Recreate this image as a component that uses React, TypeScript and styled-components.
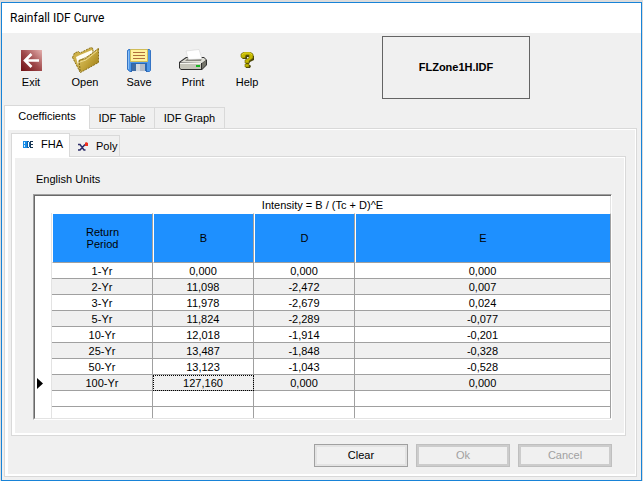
import React from "react";
import styled, { createGlobalStyle } from "styled-components";

const face = "#f0f0f0";
const edge = "#d9d9d9";
const line = "#a0a0a0";

const GlobalStyle = createGlobalStyle`
  * { box-sizing: border-box; }
  body {
    margin: 0;
    background: #dcdcdc;
    color: #000;
    font: 11px/14px "Liberation Sans", Arial, sans-serif;
  }
  button { font: inherit; color: inherit; padding: 0; border: 0; background: none; }
`;

const Window = styled.main`
  display: flex;
  flex-direction: column;
  min-height: calc(100vh - 2px);
  margin: 2px 1px 0;
  border: 1px solid #1883d7;
  background: ${face};
`;

const TitleBar = styled.h1`
  margin: 0;
  padding: 0 8px;
  background: #fff;
  font: 12px/30px Roboto, "Open Sans", sans-serif;
`;

const Toolbar = styled.header`
  display: flex;
  align-items: flex-start;
  height: 72px;
  padding: 3px 2px 0;
`;

const Tool = styled.button`
  display: flex;
  flex-direction: column;
  align-items: center;
  width: 54px;
  padding-top: 9px;
`;

const ToolIcon = styled.span`
  display: flex;
  align-items: center;
  justify-content: center;
  height: 30px;
`;

const FileBox = styled.output`
  display: flex;
  align-items: center;
  justify-content: center;
  width: 148px;
  height: 63px;
  margin-left: 108px;
  padding-bottom: 2px;
  border: 1px solid #646464;
  font-weight: bold;
`;

const TabStrip = styled.div`
  display: flex;
  align-items: flex-end;
`;

const Tab = styled.button<{ $width: number; $indent?: number }>`
  display: flex;
  align-items: center;
  justify-content: ${(p) => (p.$indent ? "flex-start" : "center")};
  gap: 8px;
  width: ${(p) => p.$width}px;
  height: 21px;
  padding-left: ${(p) => p.$indent ?? 0}px;
  border: 1px solid ${edge};
  border-width: 1px 1px 0 0;

  &[aria-selected="true"] {
    position: relative;
    height: 24px;
    margin-bottom: -1px;
    padding-bottom: 3px;
    border-left-width: 1px;
    background: #fff;
  }
`;

const Page = styled.section<{ $grow?: boolean }>`
  display: flex;
  flex: ${(p) => (p.$grow ? "1" : "none")};
  padding: 1px 1px 2px 3px;
  border: 1px solid ${edge};
  background: #fff;
`;

const OuterArea = styled.div`
  display: flex;
  flex: 1;
  flex-direction: column;
  padding: 0 4px 3px 2px;
`;

const OuterPage = styled.div`
  flex: 1;
  padding: 3px 9px 7px 3px;
  background: ${face};
`;

const InnerPage = styled.div`
  flex: 1;
  padding: 14px 12px 13px 18px;
  background: ${face};
`;

const Units = styled.div`
  padding: 0 3px 8px;
`;

const GridFrame = styled.div`
  border: 1px solid #fff;
  border-top-color: ${line};
  border-left-color: ${line};
`;

const Grid = styled.table`
  width: 100%;
  table-layout: fixed;
  border-spacing: 0;
  border: 1px solid #696969;
  border-right: 0;
  border-bottom-color: #e3e3e3;
  background: #fff;
  text-align: center;
`;

const GutterCol = styled.col`
  width: 17px;
`;

const ValueCol = styled.col`
  width: 101px;
`;

const Formula = styled.th`
  height: 17px;
  padding: 1px 0 0;
  border-right: 1px solid #e3e3e3;
  font-weight: normal;
  line-height: 16px;
`;

const Gutter = styled.td`
  padding: 0 0 0 2px;
  border-right: 1px solid #e3e3e3;
`;

const Marker = styled.svg`
  display: block;
`;

const Head = styled.th`
  height: 50px;
  padding: 0;
  border: 1px solid #fff;
  border-right-color: ${line};
  border-bottom-color: ${line};
  background: #1e90ff;
  font-weight: normal;
  line-height: 12px;
`;

const Row = styled.tr<{ $shade?: boolean; $last?: boolean }>`
  height: ${(p) => (p.$last ? 11 : 16)}px;

  & > ${Gutter} ~ * {
    padding: ${(p) => (p.$last ? 0 : 1)}px 0 0;
    border-right: 1px solid ${line};
    border-bottom: ${(p) => (p.$last ? "0" : `1px solid ${line}`)};
    background: ${(p) => (p.$shade ? face : "#fff")};
    font-weight: normal;
    line-height: 14px;
  }
`;

const Value = styled.td<{ $focused?: boolean }>`
  outline: ${(p) => (p.$focused ? "1px dotted #000" : "none")};
  outline-offset: -1px;
`;

const Actions = styled.footer`
  display: flex;
  justify-content: flex-end;
  gap: 8px;
  padding: 8px 14px 0 0;
`;

const Action = styled.button`
  width: 94px;
  height: 23px;
  padding-bottom: 1px;
  border: 1px solid ${line};
  box-shadow: inset 0 0 0 2px #e3e3e3;

  &:disabled {
    border-color: #bfbfbf;
    box-shadow: inset 0 0 0 2px #ccc;
    color: #a0a0a0;
  }
`;

const ExitIcon = () => (
  <svg width="21" height="21" viewBox="0 0 21 21" aria-hidden="true">
    <defs>
      <linearGradient id="exit" x1="0" y1="1" x2="1" y2="0">
        <stop offset="0" stopColor="#701014" />
        <stop offset=".5" stopColor="#a04a4c" />
        <stop offset="1" stopColor="#e4b0ae" />
      </linearGradient>
    </defs>
    <path d="M0 0h21v21H0z" fill="url(#exit)" />
    <path d="M18 10.500H5M10.500 4L4 10.500l6.500 6.500" fill="none" stroke="#fff" strokeWidth="2.600" />
  </svg>
);

const OpenIcon = () => (
  <svg width="27" height="27" viewBox="0 0 27 27" aria-hidden="true">
    <defs>
      <linearGradient id="folder" x1="0" y1="0" x2="1" y2="1">
        <stop offset="0" stopColor="#e2cc72" />
        <stop offset=".5" stopColor="#c4a63c" />
        <stop offset="1" stopColor="#96740c" />
      </linearGradient>
    </defs>
    <path d="M.500 10.500l2-4.500 4-1.500 1.500 1.500L19 .500l2 1v4L7 14l1 11z" fill="#cdb04a" stroke="#8a7018" strokeDasharray="2 1" />
    <path d="M4 10l4-2L20 3l1 3-7 4-7 3-1 5z" fill="#fffdf2" />
    <path d="M7 13.500l6-2L24.500 3 26.500 1v14.500L8.500 25.500z" fill="url(#folder)" stroke="#8a7018" strokeDasharray="2 1" />
    <path d="M8 15l6-2L25 4" fill="none" stroke="#eedc92" />
  </svg>
);

const SaveIcon = () => (
  <svg width="24" height="23" viewBox="0 0 24 23" aria-hidden="true">
    <path d="M.500 1.500l1-1h21l1 1v20l-1 1H3L.500 20.500z" fill="#4f98e8" stroke="#3574c4" />
    <path d="M1.500 2v18" stroke="#8cc0f6" />
    <path d="M3.500 .500h17v12h-17z" fill="#fff29c" stroke="#d0bc58" />
    <path d="M6 3.500h12M6 6.500h12M6 9.500h12" stroke="#b0703c" />
    <path d="M4 14h16v9H4z" fill="#2a68b4" />
    <path d="M5 15h5v7H5z" fill="#3f6ca4" />
    <path d="M9 15h9v7H9z" fill="#d4d9e0" />
    <path d="M13 15h5v7h-5z" fill="#b4bcc8" />
    <path d="M5 22.500h14" stroke="#e8ecf2" />
  </svg>
);

const PrintIcon = () => (
  <svg width="28" height="22" viewBox="0 0 28 22" aria-hidden="true">
    <path d="M0 13l7-5h18l3 3v5l-5 5H2l-2-2z" fill="#303030" />
    <path d="M1 13.500L7.500 9H25l2 2-4 3z" fill="#deded6" />
    <path d="M1 14h21v6H2l-1-1z" fill="#c6c6ba" />
    <path d="M1 14.500h21" stroke="#f4f4ee" />
    <path d="M23 14.500l4-3.500v5l-4 4z" fill="#74746a" />
    <path d="M6 12l3-3h14l-1 3z" fill="#8a8a82" />
    <path d="M9.500 10.500L7 2 20 .500l3 9.500z" fill="#fff" stroke="#cfcfcf" strokeWidth=".5" />
    <path d="M17 16h4v2h-4z" fill="#16b622" />
  </svg>
);

const HelpIcon = () => (
  <svg width="15" height="16" viewBox="0 0 15 16" aria-hidden="true">
    <path d="M2 6V4l2-2h7l3 2v4l-4 2-1 2H6V9l4-2V5H7v2H3zM6 13h4l1 1-1 2H6z" fill="#4a4508" />
    <path d="M1 5V2l3-2h6l3 2v4l-4 3v2H5V8l4-2V3H6L5 6H2zM5 12h4v3H5z" fill="#c4b800" stroke="#6b6408" strokeWidth=".6" />
    <path d="M2 3l2-2h6l2 2" fill="none" stroke="#e0d420" />
  </svg>
);

const FhaIcon = () => (
  <svg width="10" height="7" viewBox="0 0 10 7" shapeRendering="crispEdges" aria-hidden="true">
    <path d="M0 0h4v7H0z" fill="#168be8" />
    <path d="M1 1h1v2H1zM1 4h1v2H1z" fill="#d9f1ff" />
    <path d="M4 0h2v1H4zM4 6h2v1H4zM6 1h1v5H6zM4 1h1v5H4z" fill="#1162a8" />
    <path d="M7 0h3v1H7zM7 3h3v1H7zM7 6h3v1H7zM7 1h1v5H7z" fill="#183654" />
  </svg>
);

const PolyIcon = () => (
  <svg width="10" height="9" viewBox="0 0 10 9" aria-hidden="true">
    <path d="M0 2.500h2L6 8h1.500M7 2.500L2 8H0" fill="none" stroke="#2c2c68" strokeWidth="1.500" />
    <path d="M8 0l2 1v3H7V1z" fill="#f03020" />
  </svg>
);

const tools = [
  { label: "Exit", Icon: ExitIcon },
  { label: "Open", Icon: OpenIcon },
  { label: "Save", Icon: SaveIcon },
  { label: "Print", Icon: PrintIcon },
  { label: "Help", Icon: HelpIcon },
];

const rows = [
  ["1-Yr", "0,000", "0,000", "0,000"],
  ["2-Yr", "11,098", "-2,472", "0,007"],
  ["3-Yr", "11,978", "-2,679", "0,024"],
  ["5-Yr", "11,824", "-2,289", "-0,077"],
  ["10-Yr", "12,018", "-1,914", "-0,201"],
  ["25-Yr", "13,487", "-1,848", "-0,328"],
  ["50-Yr", "13,123", "-1,043", "-0,528"],
  ["100-Yr", "127,160", "0,000", "0,000"],
];

function CoefficientGrid() {
  return (
    <GridFrame>
      <Grid aria-labelledby="units">
        <colgroup>
          <GutterCol />
          <ValueCol />
          <ValueCol />
          <ValueCol />
          <col />
        </colgroup>
        <thead>
          <tr>
            <Formula colSpan={5}>Intensity = B / (Tc + D)^E</Formula>
          </tr>
          <tr>
            <Gutter />
            <Head scope="col">Return<br />Period</Head>
            <Head scope="col">B</Head>
            <Head scope="col">D</Head>
            <Head scope="col">E</Head>
          </tr>
        </thead>
        <tbody>
          {rows.map(([period, ...values], r) => {
            const current = r === rows.length - 1;
            return (
              <Row key={period} $shade={r % 2 === 1}>
                <Gutter>
                  {current && (
                    <Marker width="6" height="11" viewBox="0 0 6 11" aria-hidden="true">
                      <path d="M0 0l6 5.500L0 11z" />
                    </Marker>
                  )}
                </Gutter>
                <th scope="row">{period}</th>
                {values.map((v, c) => (
                  <Value key={c} $focused={current && c === 0}>{v}</Value>
                ))}
              </Row>
            );
          })}
          <Row><Gutter /><td /><td /><td /><td /></Row>
          <Row $last><Gutter /><td /><td /><td /><td /></Row>
        </tbody>
      </Grid>
    </GridFrame>
  );
}

export default function App() {
  return (
    <>
      <GlobalStyle />
      <Window>
        <TitleBar>Rainfall IDF Curve</TitleBar>
        <Toolbar>
          {tools.map(({ label, Icon }) => (
            <Tool key={label} type="button">
              <ToolIcon><Icon /></ToolIcon>
              {label}
            </Tool>
          ))}
          <FileBox>FLZone1H.IDF</FileBox>
        </Toolbar>
        <OuterArea>
          <TabStrip role="tablist">
            <Tab type="button" role="tab" aria-selected="true" $width={86}>Coefficients</Tab>
            <Tab type="button" role="tab" aria-selected="false" $width={65}>IDF Table</Tab>
            <Tab type="button" role="tab" aria-selected="false" $width={70}>IDF Graph</Tab>
          </TabStrip>
          <Page $grow role="tabpanel">
            <OuterPage>
              <TabStrip role="tablist">
                <Tab type="button" role="tab" aria-selected="true" $width={59} $indent={11}><FhaIcon />FHA</Tab>
                <Tab type="button" role="tab" aria-selected="false" $width={50} $indent={8}><PolyIcon />Poly</Tab>
              </TabStrip>
              <Page role="tabpanel">
                <InnerPage>
                  <Units id="units">English Units</Units>
                  <CoefficientGrid />
                </InnerPage>
              </Page>
              <Actions>
                <Action type="button">Clear</Action>
                <Action type="button" disabled>Ok</Action>
                <Action type="button" disabled>Cancel</Action>
              </Actions>
            </OuterPage>
          </Page>
        </OuterArea>
      </Window>
    </>
  );
}
